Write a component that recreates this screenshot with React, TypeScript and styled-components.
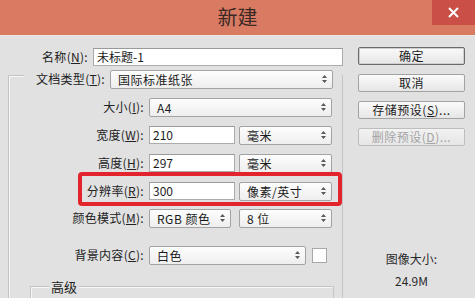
import React from 'react';
import styled, { createGlobalStyle, css } from 'styled-components';

const GlobalStyle = createGlobalStyle`
  html, body { margin: 0; padding: 0; }
  body {
    width: 475px;
    height: 298px;
    overflow: hidden;
    background: #e1e1e1;
    font-family: "Noto Sans CJK SC", "Microsoft YaHei", sans-serif;
  }
`;

const Dialog = styled.div`
  width: 475px;
  height: 298px;
  display: flex;
  flex-direction: column;
  overflow: hidden;
  background: #e1e1e1;
  color: #1e1e1e;
  font-size: 12px;
`;

const TitleBar = styled.div`
  flex: none;
  height: 35px;
  display: grid;
  grid-template-columns: 1fr auto 1fr;
  background: #d97b63;
  border-bottom: 1px solid #efe6e3;
`;

const Title = styled.div`
  grid-column: 2;
  align-self: center;
  font-size: 20px;
  line-height: 24px;
  color: #3b2923;
  padding-bottom: 1px;
`;

const CloseButton = styled.div`
  grid-column: 3;
  justify-self: end;
  width: 43px;
  height: 25px;
  background: #c94f47;
  display: flex;
  align-items: center;
  justify-content: center;
`;

const Body = styled.div`
  flex: 1;
  display: flex;
  min-height: 0;
`;

const LeftColumn = styled.div`
  flex: none;
  width: 343px;
  display: flex;
  flex-direction: column;
`;

const RightColumn = styled.div`
  flex: none;
  width: 107px;
  margin-left: 15px;
  padding-top: 11px;
  display: flex;
  flex-direction: column;
  gap: 9px;
`;

const Row = styled.div<{ $mt?: number; $ml?: number; $highlight?: boolean }>`
  position: relative;
  display: flex;
  align-items: center;
  height: 18px;
  margin-top: ${(p) => p.$mt ?? 0}px;
  margin-left: ${(p) => p.$ml ?? 0}px;
  ${(p) =>
    p.$highlight &&
    css`
      &::after {
        content: '';
        position: absolute;
        left: 69px;
        right: 0;
        top: -10px;
        bottom: -6px;
        border: 4px solid #e3242c;
        border-radius: 4px;
        pointer-events: none;
      }
    `}
`;

const HeaderRow = styled(Row)`
  background: #e1e1e1;
  padding-right: 9px;
`;

const Label = styled.label<{ $w: number }>`
  flex: none;
  width: ${(p) => p.$w}px;
  text-align: right;
  white-space: nowrap;
  margin-right: 5px;
  line-height: 18px;
  letter-spacing: 0.3px;
  color: #222;

  u {
    text-underline-offset: 1px;
  }
`;

const TextField = styled.div<{ $w: number }>`
  flex: none;
  box-sizing: border-box;
  width: ${(p) => p.$w}px;
  height: 18px;
  padding-left: 3px;
  line-height: 16px;
  background: #fff;
  border: 1px solid #ababab;
  border-top-color: #9a9a9a;
  color: #1a1a1a;
`;

const SelectBox = styled.div<{ $w: number; $ml?: number }>`
  flex: none;
  box-sizing: border-box;
  width: ${(p) => p.$w}px;
  height: 19px;
  margin-left: ${(p) => p.$ml ?? 0}px;
  padding: 0 5px 0 7px;
  display: flex;
  align-items: center;
  justify-content: space-between;
  background: linear-gradient(#fdfdfd, #eeeeee);
  border: 1px solid #a3a3a3;
  border-radius: 2px;
  color: #1a1a1a;
  white-space: nowrap;
  letter-spacing: 0.5px;
`;

const Swatch = styled.div`
  flex: none;
  width: 15px;
  height: 15px;
  margin-left: 6px;
  box-sizing: border-box;
  background: #fff;
  border: 1px solid #a8a8a8;
`;

const Group = styled.div<{ $ml: number; $mt: number; $w: number }>`
  box-sizing: border-box;
  width: ${(p) => p.$w}px;
  margin-left: ${(p) => p.$ml}px;
  margin-top: ${(p) => p.$mt}px;
  border-top: 1px solid #c4c4c4;
  border-left: 1px solid #c4c4c4;
  border-right: 1px solid #c4c4c4;
  box-shadow: inset 1px 1px 0 #f6f6f6;
  display: flex;
  flex-direction: column;
  flex: 1;
`;

const Legend = styled.div`
  align-self: flex-start;
  margin: -9px 0 0 18px;
  padding: 0 2px;
  background: #e1e1e1;
  font-size: 13px;
  line-height: 17px;
  color: #222;
`;

const Button = styled.button<{ $primary?: boolean }>`
  box-sizing: border-box;
  width: 107px;
  height: 18px;
  padding: 0;
  font: inherit;
  font-size: 12px;
  line-height: 16px;
  letter-spacing: 0.5px;
  color: #1c1c1c;
  background: linear-gradient(#fafafa, #e6e6e6);
  border: 1px solid ${(p) => (p.$primary ? '#6b6b6b' : '#a2a2a2')};
  border-radius: 2px;
  box-shadow: ${(p) => (p.$primary ? 'inset 0 0 0 1px #cfcfcf' : 'none')};

  &:disabled {
    color: #a4a4a4;
    border-color: #bdbdbd;
    background: linear-gradient(#f2f2f2, #e6e6e6);
  }
`;

const SizeInfo = styled.div`
  margin-top: 96px;
  display: flex;
  flex-direction: column;
  align-items: center;
  gap: 6px;
  color: #2a2a2a;
  line-height: 16px;
`;

const Arrows: React.FC = () => (
  <svg width="5" height="8" viewBox="0 0 5 8">
    <path d="M2.5 0 L5 3 L0 3 Z M2.5 8 L5 5 L0 5 Z" fill="#5a5a5a" />
  </svg>
);

const Select: React.FC<{ w: number; ml?: number; children: React.ReactNode }> = ({ w, ml, children }) => (
  <SelectBox $w={w} $ml={ml}>
    <span>{children}</span>
    <Arrows />
  </SelectBox>
);

export default function App() {
  return (
    <Dialog>
      <GlobalStyle />
      <TitleBar>
        <Title>新建</Title>
        <CloseButton>
          <svg width="11" height="11" viewBox="0 0 11 11">
            <path d="M1 1 L10 10 M10 1 L1 10" stroke="#fff" strokeWidth="2" />
          </svg>
        </CloseButton>
      </TitleBar>
      <Body>
        <LeftColumn>
          <Row $mt={12}>
            <Label $w={88}>
              名称(<u>N</u>):
            </Label>
            <TextField $w={250}>未标题-1</TextField>
          </Row>
          <Group $ml={8} $mt={9} $w={335}>
            <HeaderRow $mt={-6} $ml={15}>
              <Label $w={81}>
                文档类型(<u>T</u>):
              </Label>
              <Select w={223}>国际标准纸张</Select>
            </HeaderRow>
            <Row $mt={10}>
              <Label $w={135}>
                大小(<u>I</u>):
              </Label>
              <Select w={183}>A4</Select>
            </Row>
            <Row $mt={10}>
              <Label $w={135}>
                宽度(<u>W</u>):
              </Label>
              <TextField $w={86}>210</TextField>
              <Select w={93} ml={4}>
                毫米
              </Select>
            </Row>
            <Row $mt={10}>
              <Label $w={135}>
                高度(<u>H</u>):
              </Label>
              <TextField $w={86}>297</TextField>
              <Select w={93} ml={4}>
                毫米
              </Select>
            </Row>
            <Row $mt={10} $highlight>
              <Label $w={135}>
                分辨率(<u>R</u>):
              </Label>
              <TextField $w={86}>300</TextField>
              <Select w={93} ml={4}>
                像素/英寸
              </Select>
            </Row>
            <Row $mt={9}>
              <Label $w={135}>
                颜色模式(<u>M</u>):
              </Label>
              <Select w={82}>RGB 颜色</Select>
              <Select w={93} ml={8}>
                8 位
              </Select>
            </Row>
            <Row $mt={19}>
              <Label $w={135}>
                背景内容(<u>C</u>):
              </Label>
              <Select w={157}>白色</Select>
              <Swatch />
            </Row>
            <Group $ml={21} $mt={22} $w={304}>
              <Legend>高级</Legend>
            </Group>
          </Group>
        </LeftColumn>
        <RightColumn>
          <Button $primary>确定</Button>
          <Button>取消</Button>
          <Button>
            存储预设(<u>S</u>)...
          </Button>
          <Button disabled>
            删除预设(<u>D</u>)...
          </Button>
          <SizeInfo>
            <span>图像大小:</span>
            <span>24.9M</span>
          </SizeInfo>
        </RightColumn>
      </Body>
    </Dialog>
  );
}
